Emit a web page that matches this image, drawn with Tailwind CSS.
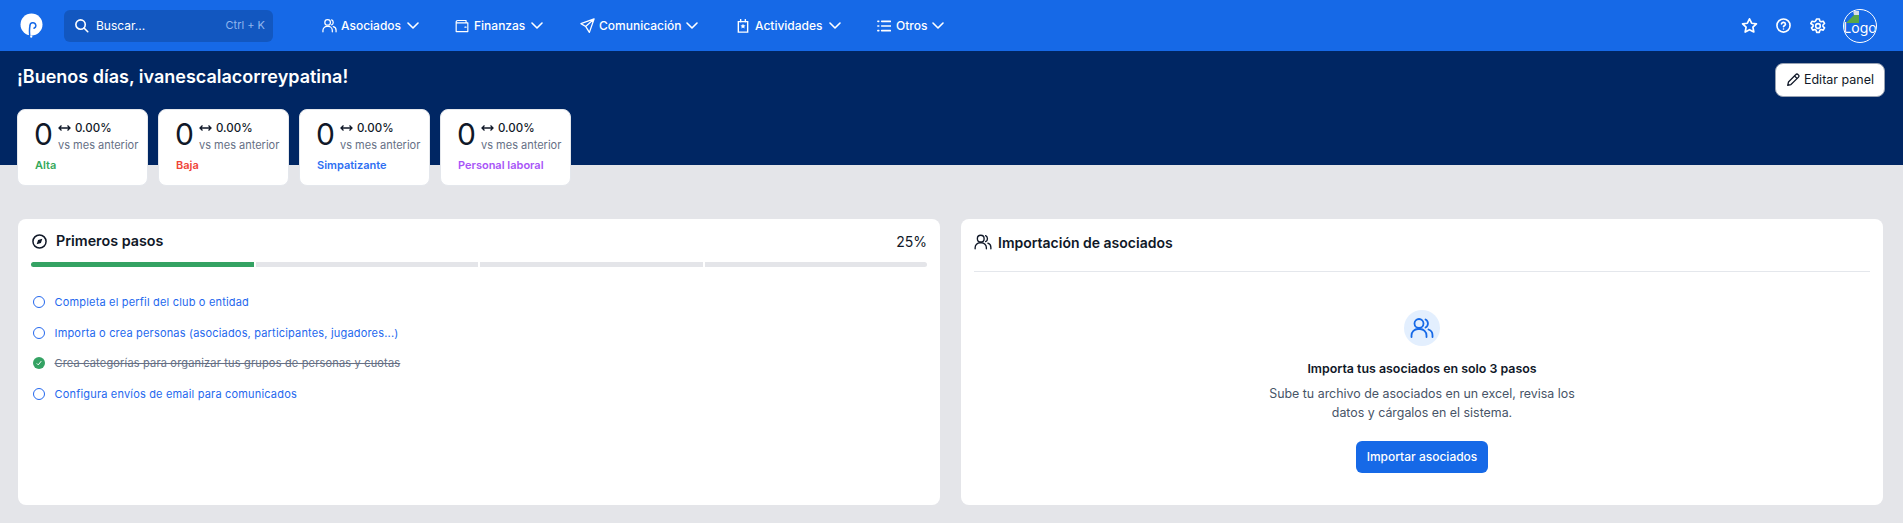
<!DOCTYPE html>
<html lang="es">

<head>
    <meta charset="UTF-8">
    <title>Panel</title>
    <script src="https://cdn.jsdelivr.net/npm/@tailwindcss/browser@4"></script>
</head>

<body class="bg-[#e4e5e9] h-[523px] overflow-hidden font-['Inter',sans-serif] text-[#101828]">
    <!-- navbar -->
    <nav class="h-[51px] bg-[#1669e7] flex items-center text-white">
        <svg class="ml-[20px] w-[23px] h-[25px]" viewBox="0 0 23 25" fill="none">
            <circle cx="11.500" cy="11.500" r="11" fill="#fff" />
            <path d="M10 24.500C9.300 20 9.300 16 10 12.500a2.900 2.900 0 1 1 4 2.800" stroke="#1669e7" stroke-width="1.500" stroke-linecap="round" />
            <path d="M11.500 22.500 11 24.500" stroke="#fff" stroke-width="2" />
        </svg>
        <!-- search -->
        <div class="ml-[21px] w-[209px] h-[32px] bg-[#1257c0] rounded-md flex items-center pl-[10px] pr-[8px]">
            <svg class="w-[15px] h-[15px]" viewBox="0 0 24 24" fill="none" stroke="#fff" stroke-width="2.600" stroke-linecap="round">
                <circle cx="10.500" cy="10.500" r="7.500" />
                <path d="m16 16 6 6" />
            </svg>
            <span class="ml-[7px] text-[12px]">Buscar...</span>
            <span class="ml-auto text-[11px] text-[#8fb5ee]">Ctrl + K</span>
        </div>
        <!-- menu -->
        <div class="ml-[49px] flex items-center text-[12px] font-medium">
            <div class="flex items-center w-[133px]">
                <svg class="w-[15px] h-[15px]" viewBox="0 0 24 24" fill="none" stroke="#fff" stroke-width="2" stroke-linecap="round">
                    <circle cx="9" cy="7" r="4.500" />
                    <path d="M15.500 3a4.500 4.500 0 0 1 0 8M1.500 22v-2a6.500 6.500 0 0 1 6.500-6.500h2A6.500 6.500 0 0 1 16.500 20v2M18 13.700a6 6 0 0 1 4.500 6V22" />
                </svg>
                <span class="ml-[4px]">Asociados</span>
                <svg class="ml-[6px] w-[12px] h-[7px]" viewBox="0 0 12 7" fill="none" stroke="#fff" stroke-width="1.600" stroke-linecap="round" stroke-linejoin="round"><path d="m1 1 5 5 5-5" /></svg>
            </div>
            <div class="flex items-center w-[125px]">
                <svg class="w-[14px] h-[14px]" viewBox="0 0 24 24" fill="none" stroke="#fff" stroke-width="2" stroke-linejoin="round">
                    <path d="M4 2.500h15v4M2 6.500h20v15H2zM2 6.500v-2l2-2" />
                    <path d="M17 14h2" stroke-linecap="round" />
                </svg>
                <span class="ml-[5px]">Finanzas</span>
                <svg class="ml-[6px] w-[12px] h-[7px]" viewBox="0 0 12 7" fill="none" stroke="#fff" stroke-width="1.600" stroke-linecap="round" stroke-linejoin="round"><path d="m1 1 5 5 5-5" /></svg>
            </div>
            <div class="flex items-center w-[157px]">
                <svg class="w-[15px] h-[15px]" viewBox="0 0 24 24" fill="none" stroke="#fff" stroke-width="2" stroke-linejoin="round" stroke-linecap="round">
                    <path d="M22.500 1.500 1.500 9l7.500 4.500L15 23zM9 13.500 22.500 1.500" />
                </svg>
                <span class="ml-[4px]">Comunicación</span>
                <svg class="ml-[5px] w-[12px] h-[7px]" viewBox="0 0 12 7" fill="none" stroke="#fff" stroke-width="1.600" stroke-linecap="round" stroke-linejoin="round"><path d="m1 1 5 5 5-5" /></svg>
            </div>
            <div class="flex items-center w-[140px]">
                <svg class="w-[12px] h-[14px]" viewBox="0 0 20 24" fill="none" stroke="#fff" stroke-width="2.400" stroke-linecap="round">
                    <path d="M2 4.500h16v18H2zM6 1v4M14 1v4" />
                    <path d="m10 8 1.300 2.700 3 .4-2.200 2 .6 3-2.700-1.500-2.700 1.500.6-3-2.200-2 3-.4z" fill="#fff" stroke="none" />
                </svg>
                <span class="ml-[6px]">Actividades</span>
                <svg class="ml-[6px] w-[12px] h-[7px]" viewBox="0 0 12 7" fill="none" stroke="#fff" stroke-width="1.600" stroke-linecap="round" stroke-linejoin="round"><path d="m1 1 5 5 5-5" /></svg>
            </div>
            <div class="flex items-center">
                <svg class="w-[14px] h-[12px]" viewBox="0 0 24 20" fill="none" stroke="#fff" stroke-width="2.800" stroke-linecap="round">
                    <path d="M8 2h15M8 10h15M8 18h15M1.500 2h1.500M1.500 10h1.500M1.500 18h1.500" />
                </svg>
                <span class="ml-[5px]">Otros</span>
                <svg class="ml-[5px] w-[12px] h-[7px]" viewBox="0 0 12 7" fill="none" stroke="#fff" stroke-width="1.600" stroke-linecap="round" stroke-linejoin="round"><path d="m1 1 5 5 5-5" /></svg>
            </div>
        </div>
        <!-- right icons -->
        <div class="ml-auto mr-[26px] flex items-center">
            <svg class="w-[17px] h-[17px]" viewBox="0 0 24 24" fill="none" stroke="#fff" stroke-width="2.400" stroke-linejoin="round">
                <path d="m12 2.500 3 6.300 6.800.9-5 4.700 1.300 6.800-6.100-3.300-6.100 3.300 1.300-6.800-5-4.700 6.800-.9z" />
            </svg>
            <svg class="ml-[18px] w-[15px] h-[15px]" viewBox="0 0 24 24" fill="none" stroke="#fff" stroke-width="2.600" stroke-linecap="round">
                <circle cx="12" cy="12" r="10.500" />
                <path d="M8.800 9.300a3.300 3.300 0 0 1 6.400.7c0 2-3.200 2.600-3.200 4" />
                <path d="M12 17.500h.01" />
            </svg>
            <svg class="ml-[19px] w-[16px] h-[16px]" viewBox="0 0 24 24" fill="none" stroke="#fff" stroke-width="2.400" stroke-linejoin="round">
                <path d="M10 1.500h4l.8 3.200 1.800 1 3.200-.9 2 3.400-2.400 2.300v2l2.400 2.300-2 3.400-3.200-.9-1.800 1-.8 3.200h-4l-.8-3.200-1.800-1-3.200.9-2-3.400 2.400-2.300v-2L1.200 8.200l2-3.400 3.200.9 1.800-1z" />
                <circle cx="12" cy="12" r="3.500" />
            </svg>
            <!-- avatar -->
            <div class="ml-[17px] w-[34px] h-[34px] rounded-full border border-white flex items-center justify-center text-[14px] relative overflow-hidden">
                <svg class="absolute left-[2px] top-[1px] w-[14px] h-[12px]" viewBox="0 0 14 12">
                    <path d="M0 12 8 4h5v8z" fill="#5aa746" />
                    <path d="M7 0h6v4H8z" fill="#d5dde8" />
                </svg>
                <span class="relative mt-[4px]">Logo</span>
            </div>
        </div>
    </nav>

    <!-- hero -->
    <header class="h-[114px] bg-[#002663] relative pl-[17px] pr-[18px] pt-[13px]">
        <div class="flex items-start justify-between">
            <h1 class="text-[18px] leading-[26px] font-semibold text-white">¡Buenos días, ivanescalacorreypatina!</h1>
            <button class="w-[110px] h-[34px] mt-[-1px] bg-white border border-[#98a2b3] rounded-lg flex items-center justify-center text-[12.500px] text-[#101828]">
                <svg class="w-[14px] h-[14px] mr-[4px]" viewBox="0 0 24 24" fill="none" stroke="#101828" stroke-width="2.200" stroke-linejoin="round">
                    <path d="M3 21l1.200-5.500L17 2.500a2.400 2.400 0 0 1 3.500 0l1 1a2.400 2.400 0 0 1 0 3.500L8.500 19.800z" />
                    <path d="m14.500 5 4.500 4.500" />
                </svg>
                Editar panel
            </button>
        </div>
        <!-- stat cards -->
        <div class="absolute left-[17px] top-[58px] flex gap-[10px]">
            <div class="w-[131px] h-[77px] bg-white rounded-lg border border-[#e4e7ec] pl-[16px] pt-[6px]">
                <div class="flex">
                    <span class="text-[30px] leading-[36px] w-[24px]">0</span>
                    <div class="pt-[4px]">
                        <div class="flex items-center text-[11.500px] leading-[16px] font-medium">
                            <svg class="w-[13px] h-[8px] mr-[4px]" viewBox="0 0 13 8" fill="none" stroke="#101828" stroke-width="1.300"><path d="M1 4h11M3.500 1.500 1 4l2.500 2.500M9.500 1.500 12 4 9.500 6.500" /></svg>0.00%
                        </div>
                        <div class="text-[11px] leading-[16px] mt-[1px] text-[#667085] whitespace-nowrap">vs mes anterior</div>
                    </div>
                </div>
                <div class="mt-[5px] ml-[1px] text-[11px] leading-[14px] font-semibold text-[#34a85a]">Alta</div>
            </div>
            <div class="w-[131px] h-[77px] bg-white rounded-lg border border-[#e4e7ec] pl-[16px] pt-[6px]">
                <div class="flex">
                    <span class="text-[30px] leading-[36px] w-[24px]">0</span>
                    <div class="pt-[4px]">
                        <div class="flex items-center text-[11.500px] leading-[16px] font-medium">
                            <svg class="w-[13px] h-[8px] mr-[4px]" viewBox="0 0 13 8" fill="none" stroke="#101828" stroke-width="1.300"><path d="M1 4h11M3.500 1.500 1 4l2.500 2.500M9.500 1.500 12 4 9.500 6.500" /></svg>0.00%
                        </div>
                        <div class="text-[11px] leading-[16px] mt-[1px] text-[#667085] whitespace-nowrap">vs mes anterior</div>
                    </div>
                </div>
                <div class="mt-[5px] ml-[1px] text-[11px] leading-[14px] font-semibold text-[#f04438]">Baja</div>
            </div>
            <div class="w-[131px] h-[77px] bg-white rounded-lg border border-[#e4e7ec] pl-[16px] pt-[6px]">
                <div class="flex">
                    <span class="text-[30px] leading-[36px] w-[24px]">0</span>
                    <div class="pt-[4px]">
                        <div class="flex items-center text-[11.500px] leading-[16px] font-medium">
                            <svg class="w-[13px] h-[8px] mr-[4px]" viewBox="0 0 13 8" fill="none" stroke="#101828" stroke-width="1.300"><path d="M1 4h11M3.500 1.500 1 4l2.500 2.500M9.500 1.500 12 4 9.500 6.500" /></svg>0.00%
                        </div>
                        <div class="text-[11px] leading-[16px] mt-[1px] text-[#667085] whitespace-nowrap">vs mes anterior</div>
                    </div>
                </div>
                <div class="mt-[5px] ml-[1px] text-[11px] leading-[14px] font-semibold text-[#2e6ff2]">Simpatizante</div>
            </div>
            <div class="w-[131px] h-[77px] bg-white rounded-lg border border-[#e4e7ec] pl-[16px] pt-[6px]">
                <div class="flex">
                    <span class="text-[30px] leading-[36px] w-[24px]">0</span>
                    <div class="pt-[4px]">
                        <div class="flex items-center text-[11.500px] leading-[16px] font-medium">
                            <svg class="w-[13px] h-[8px] mr-[4px]" viewBox="0 0 13 8" fill="none" stroke="#101828" stroke-width="1.300"><path d="M1 4h11M3.500 1.500 1 4l2.500 2.500M9.500 1.500 12 4 9.500 6.500" /></svg>0.00%
                        </div>
                        <div class="text-[11px] leading-[16px] mt-[1px] text-[#667085] whitespace-nowrap">vs mes anterior</div>
                    </div>
                </div>
                <div class="mt-[5px] ml-[1px] text-[11px] leading-[14px] font-semibold text-[#a855f7]">Personal laboral</div>
            </div>
        </div>
    </header>

    <!-- panels -->
    <main class="pt-[54px] px-[18px] flex gap-[21px]">
        <!-- primeros pasos -->
        <section class="w-[922px] h-[286px] bg-white rounded-lg px-[13px] pt-[11px]">
            <div class="flex items-center justify-between h-[22px]">
                <div class="flex items-center">
                    <svg class="ml-[1px] w-[15px] h-[15px] mr-[9px]" viewBox="0 0 24 24" fill="none" stroke="#101828" stroke-width="2.400">
                        <circle cx="12" cy="12" r="10.500" />
                        <path d="m16.500 7.500-2.200 6.800-6.800 2.200 2.200-6.800z" fill="#101828" stroke="none" />
                    </svg>
                    <h2 class="text-[14.300px] font-semibold">Primeros pasos</h2>
                </div>
                <span class="text-[14px]">25%</span>
            </div>
            <!-- progress -->
            <div class="mt-[10px] flex gap-[2px] h-[5px]">
                <div class="flex-1 bg-[#34a263] rounded-l-full"></div>
                <div class="flex-1 bg-[#e4e5e9]"></div>
                <div class="flex-1 bg-[#e4e5e9]"></div>
                <div class="flex-1 bg-[#e4e5e9] rounded-r-full"></div>
            </div>
            <!-- steps -->
            <ul class="mt-[20px] text-[11px] leading-[16px] tracking-[0.18px] text-[#2468ee]">
                <li class="h-[30.600px] flex items-center">
                    <span class="ml-[2px] w-[12px] h-[12px] rounded-full border-[1.500px] border-[#2468ee]"></span>
                    <span class="ml-[9.500px]">Completa el perfil del club o entidad</span>
                </li>
                <li class="h-[30.600px] flex items-center">
                    <span class="ml-[2px] w-[12px] h-[12px] rounded-full border-[1.500px] border-[#2468ee]"></span>
                    <span class="ml-[9.500px]">Importa o crea personas (asociados, participantes, jugadores...)</span>
                </li>
                <li class="h-[30.600px] flex items-center">
                    <span class="ml-[2px] w-[12px] h-[12px] rounded-full bg-[#34a263] flex items-center justify-center">
                        <svg class="w-[6px] h-[6px]" viewBox="0 0 8 8" fill="none" stroke="#fff" stroke-width="1.300"><path d="m1 4.500 2 2L7 1.500" /></svg>
                    </span>
                    <span class="ml-[9.500px] text-[#667085] line-through">Crea categorías para organizar tus grupos de personas y cuotas</span>
                </li>
                <li class="h-[30.600px] flex items-center">
                    <span class="ml-[2px] w-[12px] h-[12px] rounded-full border-[1.500px] border-[#2468ee]"></span>
                    <span class="ml-[9.500px]">Configura envíos de email para comunicados</span>
                </li>
            </ul>
        </section>
        <!-- importacion -->
        <section class="w-[922px] h-[286px] bg-white rounded-lg px-[13px] pt-[11px]">
            <div class="flex items-center h-[24px]">
                <svg class="w-[18px] h-[18px] mr-[6px]" viewBox="0 0 24 24" fill="none" stroke="#101828" stroke-width="1.800" stroke-linecap="round">
                    <circle cx="9" cy="7.500" r="4.500" />
                    <path d="M15.500 3.500a4.500 4.500 0 0 1 0 8M1.500 21v-1.500a6.500 6.500 0 0 1 6.500-6.500h2a6.500 6.500 0 0 1 6.500 6.500V21M18.500 13.500a6 6 0 0 1 4 5.700V21" />
                </svg>
                <h2 class="text-[14px] font-semibold">Importación de asociados</h2>
            </div>
            <div class="mt-[17px] border-t border-[#e4e7ec]"></div>
            <div class="flex flex-col items-center pt-[38px]">
                <div class="w-[36px] h-[36px] rounded-full bg-[#e3effe] flex items-center justify-center">
                    <svg class="w-[24px] h-[24px]" viewBox="0 0 24 24" fill="none" stroke="#1669e7" stroke-width="1.800" stroke-linecap="round">
                        <circle cx="9" cy="7.500" r="4.500" />
                        <path d="M15.500 3.500a4.500 4.500 0 0 1 0 8M1.500 21v-1.500a6.500 6.500 0 0 1 6.500-6.500h2a6.500 6.500 0 0 1 6.500 6.500V21M18.500 13.500a6 6 0 0 1 4 5.700V21" />
                    </svg>
                </div>
                <h3 class="mt-[13px] text-[12.400px] leading-[20px] font-semibold">Importa tus asociados en solo 3 pasos</h3>
                <p class="mt-[5px] text-[12.400px] leading-[19px] text-[#475467] text-center">Sube tu archivo de asociados en un excel, revisa los<br>datos y cárgalos en el sistema.</p>
                <button class="mt-[19px] w-[132px] h-[32px] bg-[#1669e7] rounded-md text-white text-[12px] font-medium">Importar asociados</button>
            </div>
        </section>
    </main>
</body>

</html>
